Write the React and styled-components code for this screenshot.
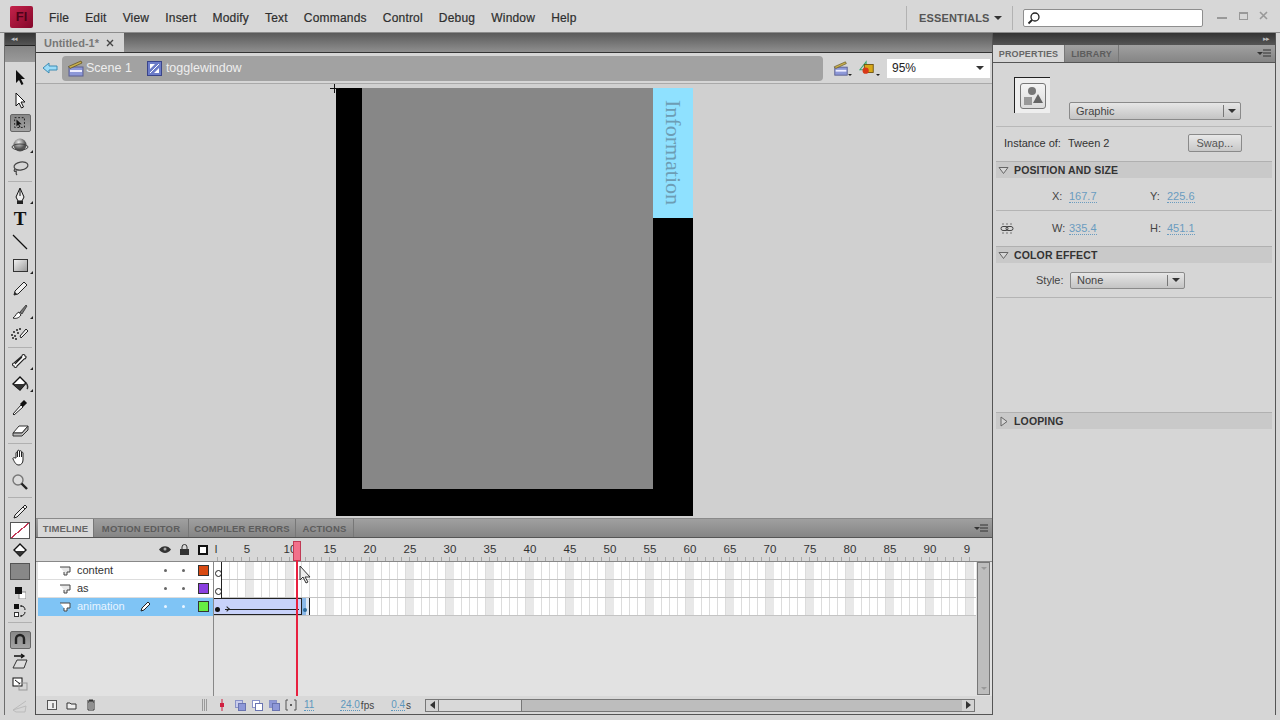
import styled, { createGlobalStyle } from 'styled-components';

const GlobalStyle = createGlobalStyle`
  html, body { margin: 0; padding: 0; background: #d6d6d6; }
  body { font-family: "Liberation Sans", Arial, sans-serif; color: #333; overflow: hidden; }
  * { box-sizing: border-box; }
  svg { display: block; }
`;

const Win = styled.div`
  width: 1280px;
  height: 720px;
  display: flex;
  flex-direction: column;
  background: #d6d6d6;
  overflow: hidden;
`;

/* ---------- menu bar ---------- */
const MenuBar = styled.div`
  height: 33px;
  flex: none;
  display: flex;
  align-items: center;
  padding-left: 10px;
  padding-top: 1px;
  background: #d7d7d7;
  border-bottom: 1px solid #8c8c8c;
`;
const Logo = styled.div`
  width: 23px;
  height: 22px;
  margin-right: 16px;
  border-radius: 2px;
  background: linear-gradient(135deg, #c4234a, #84062a);
  color: #4d0218;
  font-size: 13px;
  font-weight: 700;
  line-height: 22px;
  text-align: center;
`;
const MenuItem = styled.span`
  font-size: 12px;
  color: #2e2e2e;
  margin-right: 16px;
  margin-top: 2px;
  letter-spacing: 0.2px;
  -webkit-text-stroke: 0.2px #2e2e2e;
`;
const MenuRight = styled.div`
  margin-left: auto;
  display: flex;
  align-items: center;
  height: 24px;
  margin-top: 2px;
`;
const Workspaces = styled.div`
  height: 100%;
  width: 107px;
  display: flex;
  align-items: center;
  justify-content: space-between;
  padding: 0 10px 0 12px;
  border-left: 1px solid #b2b2b2;
  border-right: 1px solid #b2b2b2;
  font-size: 11px;
  font-weight: 700;
  letter-spacing: 0.15px;
  color: #555;
`;
const Caret = styled.i`
  display: block;
  flex: none;
  width: 0;
  height: 0;
  border-left: ${p => p.$s || 4}px solid transparent;
  border-right: ${p => p.$s || 4}px solid transparent;
  border-top: ${p => p.$s || 4}px solid ${p => p.$c || '#333'};
`;
const SearchBox = styled.div`
  width: 180px;
  height: 18px;
  margin-left: 10px;
  padding-left: 3px;
  display: flex;
  align-items: center;
  background: #fff;
  border: 1px solid #8e8e8e;
  border-radius: 2px;
`;
const WinBtns = styled.div`
  width: 77px;
  margin-top: -4px;
  padding: 0 12px 0 14px;
  display: flex;
  justify-content: space-between;
  align-items: center;
`;

/* ---------- workspace ---------- */
const Work = styled.div`
  flex: 1;
  display: flex;
  min-height: 0;
`;

/* tool panel */
const ToolPanel = styled.div`
  flex: none;
  margin-left: 4px;
  margin-bottom: 5px;
  width: 32px;
  display: flex;
  flex-direction: column;
  border-left: 1px solid #6d6d6d;
  border-right: 1px solid #4c4c4c;
  background: #d6d6d6;
`;
const DarkBar = styled.div`
  height: 12px;
  flex: none;
  padding: 0 6px;
  display: flex;
  align-items: center;
  justify-content: ${p => (p.$end ? 'flex-end' : 'flex-start')};
  background: linear-gradient(#333, #555);
  color: #bbb;
  font-size: 7px;
  letter-spacing: -1px;
`;
const GrayBar = styled.div`
  height: 17px;
  flex: none;
  margin-bottom: 3px;
  background: linear-gradient(#858585, #9a9a9a);
  border-top: 1px solid #222;
`;
const Tool = styled.div`
  position: relative;
  height: ${p => p.$h || 23}px;
  flex: none;
  display: flex;
  align-items: center;
  justify-content: center;
  color: #111;
  &::after {
    content: '';
    display: ${p => (p.$fly ? 'block' : 'none')};
    position: absolute;
    right: 2px;
    bottom: 3px;
    border-left: 3px solid transparent;
    border-bottom: 3px solid #222;
  }
`;
const PressedTool = styled.div`
  width: 21px;
  height: 18px;
  display: flex;
  align-items: center;
  justify-content: center;
  border: 1px solid #666;
  border-radius: 2px;
  background: linear-gradient(#888, #a4a4a4);
`;
const ToolSep = styled.div`
  height: 1px;
  flex: none;
  margin: ${p => p.$m || '1px 3px'};
  background: #b0b0b0;
`;
const LetterT = styled.span`
  font-family: "Liberation Serif", serif;
  font-weight: 700;
  font-size: 19px;
  line-height: 1;
  color: #111;
`;
const Swatch = styled.div`
  width: 20px;
  height: 17px;
  border: 1px solid #555;
  background: ${p => p.$bg};
`;
const StrokeSwatch = styled(Swatch)`
  background: linear-gradient(to top left, #fff 47%, #c23a58 47%, #c23a58 53%, #fff 53%);
`;

/* document column */
const DocCol = styled.div`
  flex: 1;
  min-width: 0;
  display: flex;
  flex-direction: column;
  margin-bottom: 5px;
  border-right: 1px solid #555;
  border-bottom: 1px solid #555;
`;
const DocTabs = styled.div`
  height: 20px;
  flex: none;
  display: flex;
  background: linear-gradient(#5a5a5a, #8f8f8f);
  border-bottom: 1px solid #333;
`;
const DocTab = styled.div`
  width: 88px;
  padding-left: 8px;
  display: flex;
  align-items: center;
  gap: 7px;
  background: #d4d4d4;
  font-size: 11px;
  font-weight: 700;
  color: #777;
`;
const EditBar = styled.div`
  height: 31px;
  flex: none;
  display: flex;
  align-items: center;
  padding-left: 6px;
  background: #d6d6d6;
  border-bottom: 1px solid #a9a9a9;
`;
const Crumbs = styled.div`
  width: 761px;
  height: 25px;
  margin-left: 4px;
  padding-left: 5px;
  display: flex;
  align-items: center;
  border-radius: 4px;
  background: #a2a2a2;
  color: #eee;
  font-size: 12.5px;
`;
const Crumb = styled.span`
  margin: 0 15px 0 ${p => p.$ml || 2}px;
`;
const EditIcons = styled.div`
  width: 64px;
  display: flex;
  align-items: flex-end;
  padding-left: 10px;
`;
const SmallCaret = styled(Caret)`
  margin: 0 7px 1px 0;
`;
const ZoomBox = styled.div`
  width: 103px;
  height: 19px;
  padding: 0 6px 0 5px;
  display: flex;
  align-items: center;
  justify-content: space-between;
  background: #fff;
  font-size: 12px;
  color: #222;
`;

const Stage = styled.div`
  flex: 1;
  min-height: 0;
  padding: 4px 0 0 300px;
  background: #d0d0d0;
  border-bottom: 1px solid #8a8a8a;
`;
const Artboard = styled.div`
  position: relative;
  width: 357px;
  height: 428px;
  display: flex;
  background: #000;
`;
const ArtMiddle = styled.div`
  width: 291px;
  height: 401px;
  margin-left: 26px;
  background: #878787;
`;
const InfoTab = styled.div`
  width: 40px;
  height: 130px;
  padding-top: 12px;
  display: flex;
  justify-content: center;
  background: #8fe1ff;
`;
const InfoText = styled.span`
  writing-mode: vertical-rl;
  font-family: "Liberation Serif", serif;
  font-size: 22px;
  line-height: 1;
  color: #6d9db4;
`;
const RegMark = styled.div`
  position: absolute;
  left: -6px;
  top: -4px;
`;

/* timeline */
const Timeline = styled.div`
  height: 195px;
  flex: none;
  display: flex;
  flex-direction: column;
  background: #e2e2e2;
  position: relative;
`;
const TabStrip = styled.div`
  height: ${p => p.$h || 18}px;
  flex: none;
  display: flex;
  align-items: stretch;
  padding-left: ${p => p.$pad || 0}px;
  background: linear-gradient(#a0a0a0, #858585);
  border-bottom: 1px solid #555;
`;
const PanelTab = styled.div`
  width: ${p => p.$w}px;
  display: flex;
  align-items: center;
  justify-content: center;
  font-size: ${p => p.$fs || 9.5}px;
  font-weight: 700;
  letter-spacing: 0.15px;
  white-space: nowrap;
  color: ${p => (p.$on ? '#666' : '#5c5c5c')};
  background: ${p => (p.$on ? '#d8d8d8' : 'transparent')};
  border-right: 1px solid #777;
`;
const MenuGrip = styled.div`
  margin-left: auto;
  padding-right: 4px;
  display: flex;
  align-items: center;
`;
const RulerRow = styled.div`
  height: 24px;
  flex: none;
  display: flex;
  background: #d8d8d8;
  border-bottom: 1px solid #888;
`;
const RulerHead = styled.div`
  width: 178px;
  flex: none;
  display: flex;
  align-items: center;
  justify-content: flex-end;
  gap: 9px;
  padding-right: 6px;
`;
const Ruler = styled.div`
  width: 762px;
  flex: none;
  display: flex;
  align-items: flex-start;
  padding-top: 5px;
  font-size: 11.5px;
  color: #333;
  background:
    repeating-linear-gradient(90deg, transparent 0 3px, #aaa 3px 4px, transparent 4px 8px) left bottom / 100% 4px no-repeat;
`;
const RulerNum = styled.span`
  flex: none;
  width: ${p => p.$w || 40}px;
  margin-right: ${p => p.$mr || 0}px;
  text-align: center;
  padding-left: ${p => p.$pl || 0}px;
  padding-right: ${p => p.$pr || 0}px;
`;
const TimeBody = styled.div`
  flex: 1;
  min-height: 0;
  display: flex;
`;
const Layers = styled.div`
  width: 178px;
  flex: none;
  padding-left: 2px;
  border-right: 1px solid #888;
`;
const LayerRow = styled.div`
  height: 18px;
  display: flex;
  align-items: center;
  padding-left: 21px;
  font-size: 11px;
  background: ${p => (p.$sel ? '#7fc4f5' : '#fff')};
  color: ${p => (p.$sel ? '#e8f4ff' : '#333')};
  border-bottom: 1px solid ${p => (p.$sel ? '#7fc4f5' : '#ddd')};
`;
const LayerName = styled.span`
  margin: -2px 0 0 6px;
  width: 63px;
`;
const PencilSlot = styled.span`
  width: 11px;
  margin-right: 13px;
  display: flex;
  justify-content: center;
`;
const Dot = styled.i`
  flex: none;
  display: block;
  width: 3px;
  height: 3px;
  border-radius: 50%;
  margin-right: 15px;
  background: ${p => (p.$sel ? '#e8f4ff' : '#666')};
`;
const LayerColor = styled.i`
  flex: none;
  display: block;
  margin-left: -2px;
  width: 11px;
  height: 11px;
  border: 1px solid #333;
  background: ${p => p.$c};
`;
const Frames = styled.div`
  width: 762px;
  flex: none;
`;
const FrameRow = styled.div`
  position: relative;
  height: 18px;
  border-bottom: 1px solid #c4c4c4;
  background: repeating-linear-gradient(
    90deg,
    #fff 0 7px, #dcdcdc 7px 8px,
    #fff 8px 15px, #dcdcdc 15px 16px,
    #fff 16px 23px, #dcdcdc 23px 24px,
    #fff 24px 31px, #dcdcdc 31px 32px,
    #e8e8e8 32px 40px
  );
`;
const Keyframe = styled.div`
  position: absolute;
  left: 0;
  top: 0;
  bottom: -1px;
  width: 8px;
  border-right: 1px solid #222;
  background: #fff;
  &::after {
    content: '';
    position: absolute;
    left: 1px;
    bottom: 3px;
    width: 5px;
    height: 5px;
    border: 1px solid #222;
    border-radius: 50%;
  }
`;
const Tween = styled.div`
  position: absolute;
  left: 0;
  top: 0;
  width: 88px;
  bottom: 0;
  background: #c8d2fa;
  border: 1px solid #222;
  border-left: none;
`;
const TweenLine = styled.div`
  position: absolute;
  left: 11px;
  right: 2px;
  bottom: 4px;
  height: 1px;
  background: #222;
  &::before {
    content: '';
    position: absolute;
    left: 0;
    top: -2px;
    width: 3px;
    height: 3px;
    border-top: 1px solid #222;
    border-right: 1px solid #222;
    transform: rotate(45deg);
  }
`;
const TweenDot = styled.i`
  position: absolute;
  left: 1px;
  bottom: 2px;
  width: 5px;
  height: 5px;
  border-radius: 50%;
  background: #111;
`;
const TailFrame = styled.div`
  position: absolute;
  left: 88px;
  top: 0;
  bottom: 0;
  width: 8px;
  background: linear-gradient(90deg, #8ab8e8 0 60%, #dfe8f4 60%);
  border-right: 1px solid #222;
  &::after {
    content: '';
    position: absolute;
    left: 1px;
    bottom: 3px;
    width: 4px;
    height: 4px;
    border-radius: 50%;
    background: #2a6a9a;
  }
`;
const VScroll = styled.div`
  width: 13px;
  margin-left: 1px;
  margin-bottom: 1px;
  display: flex;
  flex-direction: column;
  align-items: center;
  justify-content: space-between;
  padding: 4px 0;
  background: #bdbdbd;
  border: 1px solid #777;
`;
const StatusBar = styled.div`
  height: 18px;
  flex: none;
  display: flex;
  align-items: center;
  background: #d8d8d8;
  font-size: 10px;
  color: #444;
`;
const StatusLeft = styled.div`
  width: 178px;
  flex: none;
  display: flex;
  align-items: center;
  padding-left: 11px;
  gap: 9px;
`;
const Grip = styled.i`
  display: block;
  margin-left: 97px;
  width: 5px;
  height: 12px;
  background: repeating-linear-gradient(90deg, #9a9a9a 0 1px, transparent 1px 2px);
`;
const MarkerSlot = styled.span`
  margin-left: 5px;
`;
const OnionBtns = styled.div`
  display: flex;
  align-items: center;
  margin-left: 9px;
  gap: 4px;
`;
const HotVal = styled.span`
  color: #5d97bd;
  border-bottom: 1px dotted #5d97bd;
  line-height: 11px;
  margin-left: ${p => p.$ml || 0}px;
`;
const Unit = styled.span`
  margin-left: 1px;
`;
const HScroll = styled.div`
  margin-left: 14px;
  width: 550px;
  height: 13px;
  display: flex;
  border: 1px solid #777;
  background: #bdbdbd;
`;
const ScrollBtn = styled.div`
  width: 12px;
  flex: none;
  display: flex;
  align-items: center;
  justify-content: center;
  background: #d4d4d4;
  margin-left: ${p => (p.$end ? 'auto' : 0)};
`;
const ScrollThumb = styled.div`
  width: 84px;
  background: #d9d9d9;
  border-right: 1px solid #777;
  border-left: 1px solid #777;
`;
const TriH = styled.i`
  display: block;
  width: 0;
  height: 0;
  border-top: 4px solid transparent;
  border-bottom: 4px solid transparent;
  border-${p => (p.$left ? 'right' : 'left')}: 5px solid #333;
`;
const Playhead = styled.div`
  position: absolute;
  left: 257px;
  top: 22px;
  width: 8px;
  height: 20px;
  background: #f2708a;
  border: 1px solid #c03a55;
  &::after {
    content: '';
    position: absolute;
    left: 2px;
    top: 18px;
    width: 2px;
    height: 136px;
    background: #e8203f;
  }
`;
const Cursor = styled.div`
  position: absolute;
  left: 263px;
  top: 46px;
`;

/* right panel */
const RightPanel = styled.div`
  width: 283px;
  flex: none;
  display: flex;
  flex-direction: column;
  margin: 0 4px 5px 0;
  border-right: 1px solid #555;
  background: #d6d6d6;
`;
const RightBody = styled.div`
  flex: 1;
  display: flex;
  flex-direction: column;
`;
const InstanceHead = styled.div`
  height: 64px;
  flex: none;
  display: flex;
  padding-left: 21px;
  padding-top: 14px;
  border-bottom: 1px solid #b8b8b8;
  margin: 0 3px;
`;
const SymbolBox = styled.div`
  width: 36px;
  height: 36px;
  margin-left: -3px;
  padding: 5px;
  background: #eee;
  border-left: 1px solid #222;
  border-top: 1px solid #222;
`;
const SymbolInner = styled.div`
  width: 26px;
  height: 26px;
  border: 1px solid #777;
  border-radius: 3px;
  background: linear-gradient(#f4f4f4, #dcdcdc);
`;
const SelectBox = styled.div`
  width: ${p => p.$w}px;
  height: ${p => p.$h || 18}px;
  display: flex;
  align-items: center;
  padding-left: 6px;
  margin-left: ${p => p.$ml || 0}px;
  margin-top: ${p => p.$mt || 0}px;
  font-size: 11px;
  color: #444;
  border: 1px solid #8a8a8a;
  border-radius: 2px;
  background: linear-gradient(#e6e6e6, #c4c4c4);
`;
const SelectText = styled.span`
  flex: 1;
`;
const SelectArrow = styled.span`
  width: 17px;
  height: 100%;
  display: flex;
  align-items: center;
  justify-content: center;
  position: relative;
  &::before {
    content: '';
    position: absolute;
    left: 0;
    top: 2px;
    bottom: 2px;
    width: 1px;
    background: #777;
  }
`;
const InstanceRow = styled.div`
  height: 34px;
  flex: none;
  display: flex;
  align-items: center;
  padding: 0 0 3px 11px;
  font-size: 11px;
  color: #333;
`;
const InstanceName = styled.span`
  margin-left: 7px;
  width: 115px;
`;
const SwapBtn = styled.button`
  width: 54px;
  height: 18px;
  margin-left: 5px;
  padding: 0;
  font: 11px "Liberation Sans", Arial, sans-serif;
  color: #555;
  border: 1px solid #8a8a8a;
  border-radius: 2px;
  background: linear-gradient(#e8e8e8, #c8c8c8);
`;
const Section = styled.div`
  height: 17px;
  flex: none;
  display: flex;
  align-items: center;
  gap: 5px;
  padding-left: 2px;
  margin: 0 3px;
  background: #c9c9c9;
  border-top: 1px solid #b0b0b0;
  font-size: 10.5px;
  font-weight: 700;
  letter-spacing: 0.15px;
  color: #333;
`;
const PropRow = styled.div`
  height: ${p => p.$h || 32}px;
  flex: none;
  display: flex;
  align-items: center;
  margin: 0 3px;
  padding-top: ${p => p.$pt || 0}px;
  font-size: 11px;
  color: #444;
  border-bottom: 1px solid ${p => (p.$line ? '#b4b4b4' : 'transparent')};
`;
const LinkSlot = styled.span`
  width: 56px;
  padding-left: 4px;
  flex: none;
`;
const PropLabel = styled.span`
  width: 17px;
  flex: none;
`;
const PropValue = styled.span`
  width: 81px;
  flex: none;
  color: #6a9cc0;
`;
const Dotted = styled.span`
  border-bottom: 1px dotted #6a9cc0;
`;
const StyleLabel = styled.span`
  margin-left: 40px;
  width: 34px;
`;
const Spacer = styled.div`
  height: ${p => p.$h}px;
  flex: none;
`;

/* drawn icons */
const Clapper = () => (
  <svg width="17" height="17" viewBox="0 0 17 17">
    <rect x="2" y="7" width="14" height="9" fill="#8d98d8" stroke="#5a5f90" />
    <rect x="3" y="10" width="12" height="2" fill="#eef" />
    <path d="M1.5 6.5L14 1l1 2L3 8.5z" fill="#c8b050" stroke="#5a4a18" strokeWidth=".7" />
  </svg>
);
const SymbolIcon = () => (
  <svg width="15" height="15" viewBox="0 0 15 15">
    <rect x=".5" y=".5" width="14" height="14" fill="#6c7cc8" stroke="#39448a" />
    <path d="M3 3h5L3 8zM12 12H7l5-5z" fill="#fff" />
    <path d="M3 12l9-9" stroke="#fff" />
  </svg>
);
const ToolSvg = ({ children, s = 18 }) => (
  <svg width={s} height={s} viewBox="0 0 18 18">{children}</svg>
);
const Trash = () => (
  <svg width="10" height="12" viewBox="0 0 10 12">
    <path d="M1 2h8M3 1h4" stroke="#333" strokeWidth="1.2" />
    <path d="M2 3h6v8H2z" fill="#eee" stroke="#333" />
    <path d="M4 4v6M6 4v6" stroke="#333" />
  </svg>
);
const Onion = ({ back, front }) => (
  <svg width="13" height="12" viewBox="0 0 13 12">
    <rect x="1.5" y="1.5" width="7" height="7" fill={back} stroke="#8a93c8" />
    <rect x="4.5" y="4.5" width="7" height="7" fill={front} stroke="#6a74b0" />
  </svg>
);
const OpenArrow = () => (
  <svg width="11" height="11" viewBox="0 0 11 11">
    <path d="M1 2.500h9L5.500 8.500z" fill="#d6d6d6" stroke="#666" />
  </svg>
);
const ClosedArrow = () => (
  <svg width="11" height="11" viewBox="0 0 11 11">
    <path d="M3 1v9l6-4.500z" fill="#d6d6d6" stroke="#666" />
  </svg>
);
const LayerIcon = ({ sel }) => (
  <svg width="12" height="11" viewBox="0 0 12 11">
    <path d="M1 2h10v5H8v3H5V7" fill={sel ? '#fff' : '#e8e8e8'} stroke="#444" />
  </svg>
);

const menus = ['File', 'Edit', 'View', 'Insert', 'Modify', 'Text', 'Commands', 'Control', 'Debug', 'Window', 'Help'];
const rulerNums = [];
for (let n = 15; n <= 90; n += 5) rulerNums.push(n);

const layers = [
  { name: 'content', color: '#d84a12' },
  { name: 'as', color: '#8a3fe0' },
  { name: 'animation', color: '#66ee44', sel: true },
];

const App = () => (
  <Win>
    <GlobalStyle />
    <MenuBar>
      <Logo>Fl</Logo>
      {menus.map(m => <MenuItem key={m}>{m}</MenuItem>)}
      <MenuRight>
        <Workspaces>ESSENTIALS <Caret /></Workspaces>
        <SearchBox>
          <svg width="14" height="14" viewBox="0 0 14 14">
            <circle cx="8" cy="6" r="4" fill="none" stroke="#222" strokeWidth="1.3" />
            <path d="M5 9l-3.5 3.5" stroke="#222" strokeWidth="1.8" />
          </svg>
        </SearchBox>
        <WinBtns>
          <svg width="10" height="9" viewBox="0 0 10 9"><path d="M0 7h10" stroke="#999" strokeWidth="2" /></svg>
          <svg width="9" height="9" viewBox="0 0 9 9"><rect x=".5" y="1.5" width="8" height="7" fill="none" stroke="#999" /><path d="M0 2h9" stroke="#999" strokeWidth="2" /></svg>
          <svg width="9" height="9" viewBox="0 0 9 9"><path d="M1 1l7 7M8 1L1 8" stroke="#999" strokeWidth="1.6" /></svg>
        </WinBtns>
      </MenuRight>
    </MenuBar>

    <Work>
      <ToolPanel>
        <DarkBar>◂◂</DarkBar>
        <GrayBar />
        <Tool><ToolSvg><path d="M5 2v13l3-3 2.5 5 2-1-2.500-5H14z" fill="#111" /></ToolSvg></Tool>
        <Tool><ToolSvg><path d="M5 2v13l3-3 2.500 5 2-1-2.500-5H14z" fill="#fff" stroke="#111" /></ToolSvg></Tool>
        <Tool>
          <PressedTool>
            <ToolSvg s={16}>
              <rect x="3" y="3" width="11" height="11" fill="none" stroke="#111" strokeDasharray="2 2" />
              <path d="M5 5v8l2-2 1.500 3 1-.6L8 10.500h3z" fill="#111" />
            </ToolSvg>
          </PressedTool>
        </Tool>
        <Tool $fly $h={22}>
          <svg width="18" height="18" viewBox="0 0 18 18">
            <defs>
              <radialGradient id="ball" cx=".4" cy=".3">
                <stop offset="0" stopColor="#eee" />
                <stop offset="1" stopColor="#555" />
              </radialGradient>
            </defs>
            <circle cx="9" cy="9" r="6.500" fill="url(#ball)" />
            <ellipse cx="9" cy="11" rx="8" ry="3" fill="none" stroke="#444" />
          </svg>
        </Tool>
        <Tool>
          <ToolSvg>
            <ellipse cx="10" cy="7" rx="7" ry="4" fill="none" stroke="#444" strokeWidth="1.200" transform="rotate(-10 10 7)" />
            <path d="M4 10c-2 2 0 3 1 2s-1 2 1 4" fill="none" stroke="#444" strokeWidth="1.200" />
          </ToolSvg>
        </Tool>
        <ToolSep $m="2px 3px" />
        <Tool $fly>
          <ToolSvg>
            <path d="M9 1l4 9-2 4H7l-2-4z" fill="#eee" stroke="#111" />
            <path d="M9 2v7" stroke="#111" />
            <rect x="6" y="14" width="6" height="3" fill="#222" />
          </ToolSvg>
        </Tool>
        <Tool><LetterT>T</LetterT></Tool>
        <Tool $h={24}><ToolSvg><path d="M2 2l14 14" stroke="#111" strokeWidth="1.300" /></ToolSvg></Tool>
        <Tool $fly>
          <svg width="15" height="13" viewBox="0 0 15 13">
            <defs>
              <linearGradient id="rectg" x1="0" y1="0" x2="1" y2="1">
                <stop offset="0" stopColor="#f4f4f4" />
                <stop offset="1" stopColor="#999" />
              </linearGradient>
            </defs>
            <rect x=".5" y=".5" width="14" height="12" fill="url(#rectg)" stroke="#333" />
          </svg>
        </Tool>
        <Tool $h={24}>
          <ToolSvg>
            <path d="M3 15l1-4L13 2l3 3-9 9z" fill="#eee" stroke="#222" />
            <path d="M3 15l1-3 2 2z" fill="#222" />
          </ToolSvg>
        </Tool>
        <Tool $fly $h={21}>
          <ToolSvg>
            <path d="M9 9l6-7 1 1-5 8z" fill="#777" stroke="#222" strokeWidth=".7" />
            <path d="M2 15c3 1 6 0 8-3l-2-3c-3 1-3 4-6 6z" fill="#fff" stroke="#222" />
          </ToolSvg>
        </Tool>
        <Tool>
          <ToolSvg>
            <path d="M9 11l6-7 2 2-7 7z" fill="#eee" stroke="#222" />
            <path d="M1 10h.01M3 7h.01M6 5h.01M9 4h.01M4 11h.01M7 8h.01M2 13h.01M5 14h.01" stroke="#222" strokeWidth="2" strokeLinecap="round" />
          </ToolSvg>
        </Tool>
        <ToolSep $m="2px 3px 1px" />
        <Tool $fly $h={24}>
          <ToolSvg>
            <path d="M4 12l7-7M3 11c-2 0-2 3 0 3 0 2 3 2 3 0l7-7c2 0 3-3 1-3 0-2-3-2-3 0z" fill="#fff" stroke="#222" strokeWidth="1.100" />
          </ToolSvg>
        </Tool>
        <Tool $fly $h={22}>
          <ToolSvg>
            <path d="M2 9l7-7 6 6-6 7z" fill="#fff" stroke="#111" strokeWidth="1.400" />
            <path d="M2 9h10l3-1-6 7z" fill="#333" />
            <path d="M15 8c2 2 2 5 1 6" stroke="#333" strokeWidth="1.500" fill="none" />
          </ToolSvg>
        </Tool>
        <Tool>
          <ToolSvg>
            <path d="M2 16l8-9 2 2-9 8z" fill="#fff" stroke="#222" />
            <path d="M10 6l3-3 2 2-3 3z" fill="#111" stroke="#111" strokeWidth="1.500" />
          </ToolSvg>
        </Tool>
        <Tool $h={24}>
          <ToolSvg>
            <path d="M2 12l6-7h9l-6 7z" fill="#fff" stroke="#333" />
            <path d="M2 12v3h9l6-6V5l-6 7z" fill="#bbb" stroke="#333" />
          </ToolSvg>
        </Tool>
        <ToolSep />
        <Tool $h={26}>
          <ToolSvg>
            <path d="M5 9V4c0-1 1.500-1 1.500 0v4V2c0-1 2-1 2 0v6V2.500c0-1 2-1 2 0V8V4c0-1 1.500-1 1.500 0v7c0 3-2 5-4 5-3 0-4-2-6-6-.500-1 1-2 2-1z" fill="#fff" stroke="#222" />
          </ToolSvg>
        </Tool>
        <Tool $h={22}>
          <ToolSvg>
            <circle cx="7" cy="7" r="5" fill="#ddd" stroke="#777" strokeWidth="1.400" />
            <path d="M10.500 10.500L16 16" stroke="#222" strokeWidth="2.400" />
          </ToolSvg>
        </Tool>
        <ToolSep $m="4px 3px" />
        <Tool $h={20}><ToolSvg><path d="M3 15l1-3 8-8 2 2-8 8zM12 4l2-2 2 2-2 2z" fill="#eee" stroke="#222" /></ToolSvg></Tool>
        <Tool $h={16}><StrokeSwatch /></Tool>
        <Tool $h={24}>
          <ToolSvg>
            <path d="M3 9l6-6 6 6-6 6z" fill="#fff" stroke="#111" strokeWidth="1.400" />
            <path d="M4 10h10l-5 5z" fill="#333" />
          </ToolSvg>
        </Tool>
        <Tool $h={19}><Swatch $bg="#888" /></Tool>
        <Tool $h={24}>
          <svg width="11" height="12" viewBox="0 0 11 12">
            <rect x="4" y="5" width="7" height="7" fill="#fff" stroke="#888" />
            <rect width="7" height="7" fill="#111" />
          </svg>
        </Tool>
        <Tool $h={12}>
          <svg width="12" height="14" viewBox="0 0 12 14">
            <rect width="5" height="5" fill="#111" />
            <rect x=".5" y="8.500" width="4" height="4" fill="#fff" stroke="#333" />
            <path d="M7 2c3 0 4 2 4 4M7 12c2 0 4-2 4-4M6 2h2M6 12h2" fill="none" stroke="#111" />
          </svg>
        </Tool>
        <ToolSep $m="5px 3px" />
        <Tool $h={23}>
          <PressedTool>
            <svg width="14" height="14" viewBox="0 0 14 14">
              <path d="M3 11V6a4 4 0 0 1 8 0v5" fill="none" stroke="#222" strokeWidth="2.400" />
            </svg>
          </PressedTool>
        </Tool>
        <Tool $h={19}>
          <ToolSvg>
            <path d="M3 4h10M10 2l3 2-3 2" fill="none" stroke="#111" strokeWidth="1.300" />
            <path d="M6 8h10l-3 8H2z" fill="#ddd" stroke="#333" />
          </ToolSvg>
        </Tool>
        <Tool $h={27}>
          <ToolSvg>
            <rect x="2" y="3" width="9" height="8" fill="#fff" stroke="#111" />
            <rect x="8" y="8" width="8" height="7" fill="none" stroke="#999" />
            <path d="M4 5l5 4" stroke="#111" />
          </ToolSvg>
        </Tool>
        <Tool $h={18}>
          <ToolSvg><path d="M2 13l13-4-1 6H5zM2 13l13-9" fill="none" stroke="#bbb" /></ToolSvg>
        </Tool>
      </ToolPanel>

      <DocCol>
        <DocTabs>
          <DocTab>Untitled-1* <svg width="8" height="8" viewBox="0 0 8 8"><path d="M1 1l6 6M7 1L1 7" stroke="#444" strokeWidth="1.400" /></svg></DocTab>
        </DocTabs>
        <EditBar>
          <svg width="16" height="14" viewBox="0 0 16 14">
            <path d="M1 7l6-5v3h8v4H7v3z" fill="#9cdcf8" stroke="#3c8cb4" />
          </svg>
          <Crumbs>
            <Clapper />
            <Crumb>Scene 1</Crumb>
            <SymbolIcon />
            <Crumb $ml={4}>togglewindow</Crumb>
          </Crumbs>
          <EditIcons>
            <Clapper />
            <SmallCaret $s={2.5} $c="#222" />
            <svg width="19" height="18" viewBox="0 0 19 18">
              <path d="M1 11l7-9v9z" fill="none" stroke="#3aa870" strokeWidth="1.200" />
              <rect x="6" y="5" width="10" height="9" fill="#d8a818" stroke="#6a5010" />
              <circle cx="7.500" cy="12" r="3.500" fill="#d83818" />
            </svg>
            <SmallCaret $s={2.5} $c="#222" />
          </EditIcons>
          <ZoomBox>95% <Caret /></ZoomBox>
        </EditBar>
        <Stage>
          <Artboard>
            <RegMark>
              <svg width="9" height="9" viewBox="0 0 9 9"><path d="M4.500 0v9M0 4.500h9" stroke="#111" /></svg>
            </RegMark>
            <ArtMiddle />
            <InfoTab><InfoText>Information</InfoText></InfoTab>
          </Artboard>
        </Stage>
        <Timeline>
          <TabStrip $pad={2} $h={19}>
            <PanelTab $on $w={56}>TIMELINE</PanelTab>
            <PanelTab $w={95}>MOTION EDITOR</PanelTab>
            <PanelTab $w={107}>COMPILER ERRORS</PanelTab>
            <PanelTab $w={58}>ACTIONS</PanelTab>
            <MenuGrip>
              <svg width="14" height="9" viewBox="0 0 14 9"><path d="M0 3l3 3 3-3z" fill="#333" /><path d="M6 1h8M6 4h8M6 7h8" stroke="#333" /></svg>
            </MenuGrip>
          </TabStrip>
          <RulerRow>
            <RulerHead>
              <svg width="12" height="9" viewBox="0 0 12 9"><path d="M0 4.500C3 0 9 0 12 4.500 9 9 3 9 0 4.500z" fill="#333" /><circle cx="6" cy="4" r="1.500" fill="#aaa" /></svg>
              <svg width="9" height="11" viewBox="0 0 9 11"><path d="M2 5V3a2.500 2.500 0 0 1 5 0v2" fill="none" stroke="#333" /><rect y="5" width="9" height="6" fill="#333" /></svg>
              <svg width="10" height="10" viewBox="0 0 10 10"><rect x="1" y="1" width="8" height="8" fill="#fff" stroke="#111" strokeWidth="2" /></svg>
            </RulerHead>
            <Ruler>
              <RulerNum $w={4} $mr={12}>l</RulerNum>
              <RulerNum $pr={6}>5</RulerNum>
              <RulerNum>10</RulerNum>
              {rulerNums.map(n => <RulerNum key={n}>{n}</RulerNum>)}
              <RulerNum $w={26} $pl={8}>9</RulerNum>
            </Ruler>
          </RulerRow>
          <TimeBody>
            <Layers>
              {layers.map(l => (
                <LayerRow key={l.name} $sel={l.sel}>
                  <LayerIcon sel={l.sel} />
                  <LayerName>{l.name}</LayerName>
                  <PencilSlot>
                    {l.sel && (
                      <svg width="11" height="11" viewBox="0 0 11 11"><path d="M1 10l1-3 6-6 2 2-6 6z" fill="#fff" stroke="#222" /></svg>
                    )}
                  </PencilSlot>
                  <Dot $sel={l.sel} />
                  <Dot $sel={l.sel} />
                  <LayerColor $c={l.color} />
                </LayerRow>
              ))}
            </Layers>
            <Frames>
              <FrameRow><Keyframe /></FrameRow>
              <FrameRow><Keyframe /></FrameRow>
              <FrameRow>
                <Tween><TweenDot /><TweenLine /></Tween>
                <TailFrame />
              </FrameRow>
            </Frames>
            <VScroll>
              <Caret $s={3} $c="#999" />
              <Caret $s={3} $c="#999" />
            </VScroll>
          </TimeBody>
          <StatusBar>
            <StatusLeft>
              <svg width="10" height="10" viewBox="0 0 10 10"><rect x=".5" y=".5" width="9" height="9" fill="#eee" stroke="#555" /><path d="M6 3v5" stroke="#222" /></svg>
              <svg width="11" height="9" viewBox="0 0 11 9"><path d="M1 2h3l1 1h5v5H1z" fill="#eee" stroke="#333" /></svg>
              <Trash />
              <Grip />
            </StatusLeft>
            <MarkerSlot>
              <svg width="6" height="12" viewBox="0 0 6 12"><path d="M3 0v12" stroke="#d02040" /><rect x="1" y="4" width="4" height="4" fill="#d02040" /></svg>
            </MarkerSlot>
            <OnionBtns>
              <Onion back="#c8ccec" front="#8e98d8" />
              <Onion back="#fff" front="#fff" />
              <Onion back="#8e98d8" front="#8e98d8" />
              <svg width="12" height="12" viewBox="0 0 12 12"><path d="M3 1H1v10h2M9 1h2v10H9" fill="none" stroke="#555" /><circle cx="6" cy="6" r="1" fill="#333" /></svg>
            </OnionBtns>
            <HotVal $ml={7}>11</HotVal>
            <HotVal $ml={26}>24.0</HotVal>
            <Unit>fps</Unit>
            <HotVal $ml={17}>0.4</HotVal>
            <Unit>s</Unit>
            <HScroll>
              <ScrollBtn><TriH $left /></ScrollBtn>
              <ScrollThumb />
              <ScrollBtn $end><TriH /></ScrollBtn>
            </HScroll>
          </StatusBar>
          <Playhead />
          <Cursor>
            <svg width="14" height="20" viewBox="0 0 14 20"><path d="M1 1v14l3-3 3 6 2-1-3-5h5z" fill="#eee" stroke="#333" /></svg>
          </Cursor>
        </Timeline>
      </DocCol>

      <RightPanel>
        <DarkBar $end>▸▸</DarkBar>
        <TabStrip>
          <PanelTab $on $w={72} $fs={9}>PROPERTIES</PanelTab>
          <PanelTab $w={54} $fs={9}>LIBRARY</PanelTab>
          <MenuGrip>
            <svg width="14" height="9" viewBox="0 0 14 9"><path d="M0 3l3 3 3-3z" fill="#333" /><path d="M6 1h8M6 4h8M6 7h8" stroke="#333" /></svg>
          </MenuGrip>
        </TabStrip>
        <RightBody>
          <InstanceHead>
            <SymbolBox>
              <SymbolInner>
                <svg width="24" height="24" viewBox="0 0 24 24">
                  <circle cx="11" cy="7" r="4" fill="#777" />
                  <rect x="3" y="13" width="8" height="8" fill="#999" />
                  <path d="M12 19h10l-5-9z" fill="#666" />
                </svg>
              </SymbolInner>
            </SymbolBox>
            <SelectBox $w={172} $ml={19} $mt={25}>
              <SelectText>Graphic</SelectText>
              <SelectArrow><Caret /></SelectArrow>
            </SelectBox>
          </InstanceHead>
          <InstanceRow>
            Instance of: <InstanceName>Tween 2</InstanceName>
            <SwapBtn>Swap...</SwapBtn>
          </InstanceRow>
          <Section>
            <OpenArrow />
            POSITION AND SIZE
          </Section>
          <PropRow $line $h={33} $pt={3}>
            <LinkSlot />
            <PropLabel>X:</PropLabel>
            <PropValue><Dotted>167.7</Dotted></PropValue>
            <PropLabel>Y:</PropLabel>
            <PropValue><Dotted>225.6</Dotted></PropValue>
          </PropRow>
          <PropRow $h={35}>
            <LinkSlot>
              <svg width="14" height="13" viewBox="0 0 14 13">
                <path d="M3 1v2M7 1v2M11 1v2M3 10v2M7 10v2M11 10v2" stroke="#777" />
                <rect x="1" y="4.500" width="7" height="4" rx="2" fill="none" stroke="#444" />
                <rect x="6" y="4.500" width="7" height="4" rx="2" fill="none" stroke="#444" />
              </svg>
            </LinkSlot>
            <PropLabel>W:</PropLabel>
            <PropValue><Dotted>335.4</Dotted></PropValue>
            <PropLabel>H:</PropLabel>
            <PropValue><Dotted>451.1</Dotted></PropValue>
          </PropRow>
          <Section>
            <OpenArrow />
            COLOR EFFECT
          </Section>
          <PropRow $line $h={35}>
            <StyleLabel>Style:</StyleLabel>
            <SelectBox $w={115} $h={17}>
              <SelectText>None</SelectText>
              <SelectArrow><Caret /></SelectArrow>
            </SelectBox>
          </PropRow>
          <Spacer $h={114} />
          <Section>
            <ClosedArrow />
            LOOPING
          </Section>
        </RightBody>
      </RightPanel>
    </Work>
  </Win>
);

export default App;
